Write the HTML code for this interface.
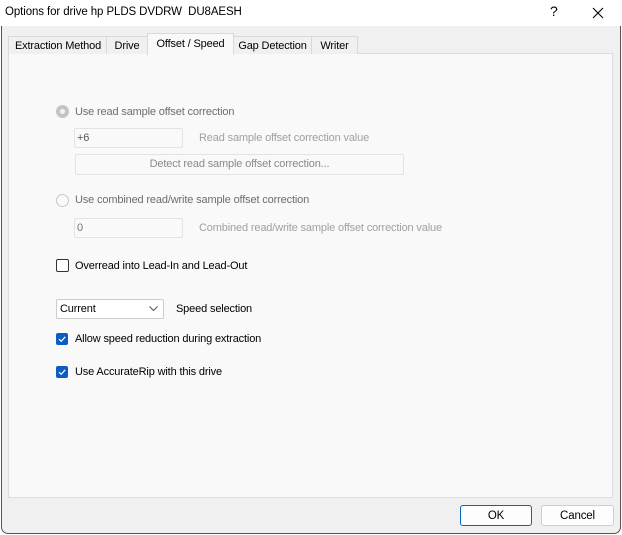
<!DOCTYPE html><html><head><style>
body{margin:0;width:622px;height:535px;background:#fff;font-family:"Liberation Sans",sans-serif;font-size:11px;letter-spacing:-0.15px;line-height:15px;color:#000;position:relative;overflow:hidden}
.a{position:absolute;white-space:nowrap}
.win{position:absolute;left:1px;top:0;width:618px;height:533px;border:1px solid #555;border-top:none;border-radius:0 0 7px 7px;background:#f0f0f0}
.tb{position:absolute;left:0;top:0;width:621px;height:26px;background:#fff}
.tab{position:absolute;top:36px;height:17px;background:#f0f0f0;border:1px solid #d9d9d9;border-bottom:none;line-height:18px;text-align:center}
.panel{position:absolute;left:8px;top:53px;width:603px;height:443px;background:#f9f9f9;border:1px solid #dcdcdc}
.g{color:#a0a0a0}
.box{position:absolute;border:1px solid #e3e3e3;background:#f9f9f9;border-radius:2px}
.cb{position:absolute;width:12px;height:12px;border-radius:2px;background:#0a5ec2;line-height:0}
.btn{position:absolute;top:505px;height:19px;border:1px solid #cfcfcf;border-radius:3px;background:#fdfdfd;text-align:center;line-height:20px;font-size:11.5px}
</style></head><body>
<div class="win"></div>
<div class="tb"></div>
<div class="a" style="left:5px;top:5px;font-size:11.5px;letter-spacing:-0.1px">Options for drive hp PLDS DVDRW&nbsp; DU8AESH</div>
<div class="a" style="left:550px;top:4px;font-size:14px">?</div>
<svg class="a" style="left:592px;top:7px" width="12" height="12"><path d="M1 1L11 11M11 1L1 11" stroke="#000" stroke-width="1.1"/></svg>
<div class="panel"></div>
<div class="tab" style="left:8px;width:98px">Extraction Method</div>
<div class="tab" style="left:106px;width:40px">Drive</div>
<div class="tab" style="left:232px;width:79px">Gap Detection</div>
<div class="tab" style="left:311px;width:45px">Writer</div>
<div class="tab" style="left:147px;top:33px;width:85px;height:21px;background:#f9f9f9;line-height:20px">Offset / Speed</div>
<div class="a" style="left:56px;top:105px;width:13px;height:13px;border-radius:50%;background:#c4c4c4"><div style="position:absolute;left:4px;top:4px;width:5px;height:5px;border-radius:50%;background:#f4f4f4"></div></div>
<div class="a g" style="left:75px;top:105px;color:#6d6d6d">Use read sample offset correction</div>
<div class="box" style="left:74px;top:128px;width:107px;height:18px"></div>
<div class="a" style="left:77px;top:131px;color:#555">+6</div>
<div class="a g" style="left:199px;top:131px">Read sample offset correction value</div>
<div class="box" style="left:75px;top:154px;width:327px;height:19px"></div>
<div class="a g" style="left:75px;top:157px;width:329px;text-align:center;color:#8a8a8a">Detect read sample offset correction...</div>
<div class="a" style="left:56px;top:194px;width:11px;height:11px;border-radius:50%;border:1px solid #c8c8c8"></div>
<div class="a" style="left:75px;top:193px;color:#6d6d6d">Use combined read/write sample offset correction</div>
<div class="box" style="left:74px;top:218px;width:107px;height:18px"></div>
<div class="a" style="left:77px;top:221px;color:#777">0</div>
<div class="a g" style="left:199px;top:221px">Combined read/write sample offset correction value</div>
<div class="a" style="left:56px;top:259px;width:11px;height:11px;border:1px solid #333;border-radius:2px;background:#fff"></div>
<div class="a" style="left:75px;top:259px">Overread into Lead-In and Lead-Out</div>
<div class="a" style="left:56px;top:299px;width:106px;height:18px;border:1px solid #ccc;background:#fff;border-radius:2px"></div>
<div class="a" style="left:60px;top:302px">Current</div>
<svg class="a" style="left:149px;top:306px" width="9" height="6"><path d="M0.5 0.5L4.5 4.5L8.5 0.5" stroke="#555" fill="none"/></svg>
<div class="a" style="left:176px;top:302px">Speed selection</div>
<div class="cb" style="left:56px;top:333px"><svg width="12" height="12"><path d="M3 6.2L5.2 8.3L9.2 3.8" stroke="#fff" stroke-width="1.2" fill="none"/></svg></div>
<div class="a" style="left:75px;top:332px">Allow speed reduction during extraction</div>
<div class="cb" style="left:56px;top:366px"><svg width="12" height="12"><path d="M3 6.2L5.2 8.3L9.2 3.8" stroke="#fff" stroke-width="1.2" fill="none"/></svg></div>
<div class="a" style="left:75px;top:365px">Use AccurateRip with this drive</div>
<div class="btn" style="left:460px;width:70px;border:1px solid #0067c0">OK</div>
<div class="btn" style="left:541px;width:71px">Cancel</div>
</body></html>
